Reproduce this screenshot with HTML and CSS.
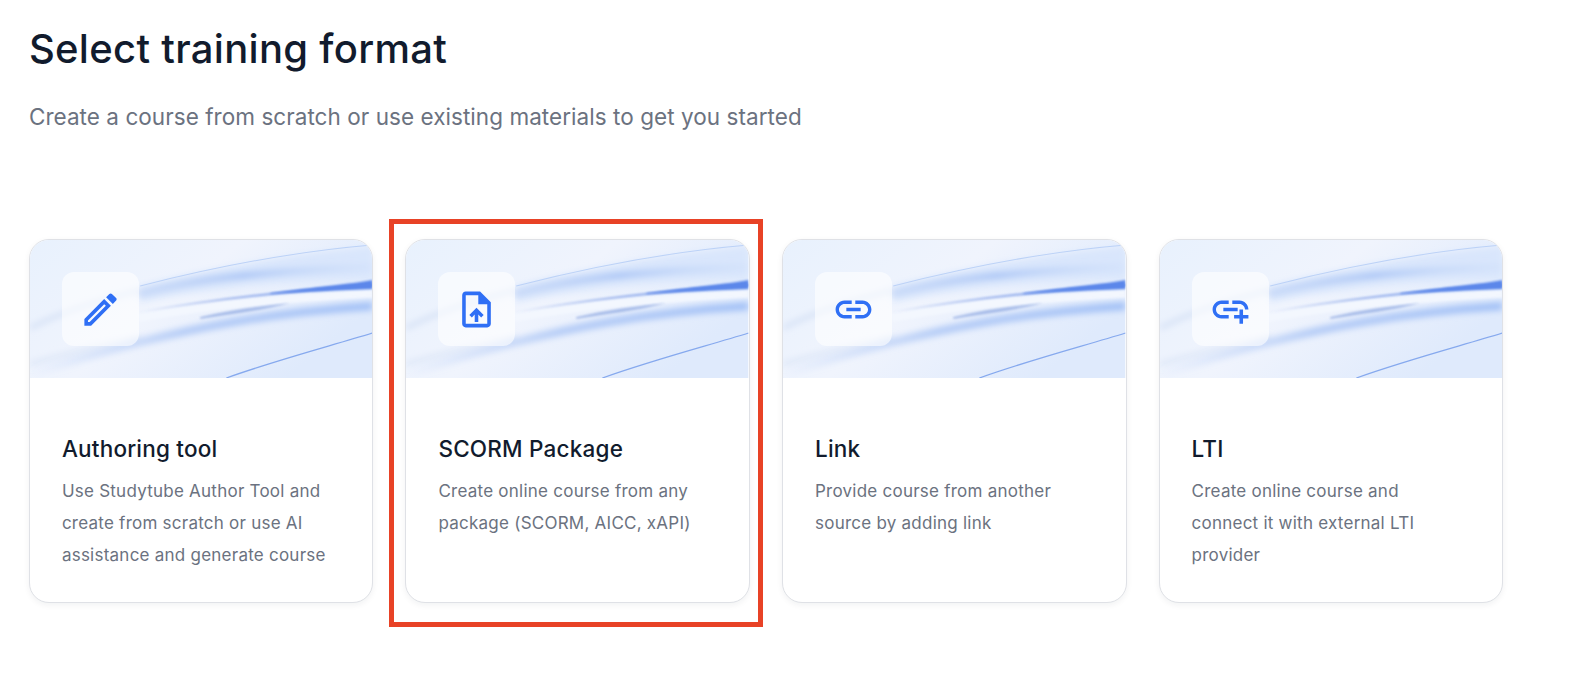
FILE: index.html
```html
<!DOCTYPE html>
<html lang="en">
<head>
    <meta charset="UTF-8">
    <title>Select training format</title>
    <link rel="stylesheet" href="styles.css">
</head>
<body>
    <svg class="defs" width="0" height="0" aria-hidden="true">
        <defs>
            <linearGradient id="bannerBase" x1="0" y1="0" x2="1" y2="0.5">
                <stop offset="0" stop-color="#e8f1fd"/>
                <stop offset="0.5" stop-color="#f0f4fd"/>
                <stop offset="1" stop-color="#dfeafc"/>
            </linearGradient>
            <linearGradient id="fadeIn" x1="0" y1="0" x2="1" y2="0">
                <stop offset="0" stop-color="#a9c4f5" stop-opacity="0"/>
                <stop offset="0.45" stop-color="#a9c4f5" stop-opacity="0.85"/>
                <stop offset="1" stop-color="#a0bff6"/>
            </linearGradient>
            <linearGradient id="topBand" x1="0" y1="0" x2="1" y2="0">
                <stop offset="0" stop-color="#b3caf4" stop-opacity="0.5"/>
                <stop offset="0.45" stop-color="#a9c4f5"/>
                <stop offset="1" stop-color="#c9dcf9" stop-opacity="0.3"/>
            </linearGradient>
            <linearGradient id="darkStreak" x1="0" y1="0" x2="1" y2="0">
                <stop offset="0" stop-color="#7f9de6" stop-opacity="0"/>
                <stop offset="0.4" stop-color="#7f9de6" stop-opacity="0.7"/>
                <stop offset="1" stop-color="#4f7ee8"/>
            </linearGradient>
            <filter id="blur1" x="-20%" y="-50%" width="140%" height="200%"><feGaussianBlur stdDeviation="1"/></filter>
            <filter id="blur3" x="-20%" y="-50%" width="140%" height="200%"><feGaussianBlur stdDeviation="3"/></filter>
            <symbol id="banner" viewBox="0 0 342 138" preserveAspectRatio="none">
                <rect width="342" height="138" fill="url(#bannerBase)"/>
                <path d="M0 88 C40 68 80 58 110 50" stroke="#d8e3f6" stroke-width="5" fill="none" filter="url(#blur3)"/>
                <path d="M0 124 C40 112 80 104 110 98" stroke="#dfe8f8" stroke-width="5" fill="none" filter="url(#blur3)"/>
                <path d="M110 46 C170 30 260 14 342 7 L342 38 C260 40 180 48 110 62Z" fill="#d9e6fc" filter="url(#blur3)"/>
                <path d="M108 54 C160 40 220 32 342 27" stroke="url(#topBand)" stroke-width="6" fill="none" filter="url(#blur3)"/>
                <path d="M110 46 C180 28 260 12 342 5" stroke="#bcd2f7" stroke-width="1" fill="none"/>
                <path d="M108 78 C170 66 260 58 342 54" stroke="#f3f7fe" stroke-width="8" fill="none" filter="url(#blur1)"/>
                <path d="M110 72 C190 58 270 50 342 45" stroke="url(#darkStreak)" stroke-width="2" fill="none" filter="url(#blur1)"/>
                <path d="M240 53 C285 47 320 44 342 40 L342 49 C310 50 275 52 240 54Z" fill="#5b87ea" filter="url(#blur1)"/>
                <path d="M170 77 C200 70 230 66 260 63 C230 71 200 74 170 79Z" fill="#a9bde9" filter="url(#blur1)"/>
                <path d="M0 134 C50 118 80 110 110 102 C150 92 180 86 203 82 C260 72 310 68 342 66" stroke="url(#fadeIn)" stroke-width="8" fill="none" filter="url(#blur3)"/>
                <path d="M196 138 C246 120 300 106 342 93" stroke="#86a9ee" stroke-width="1.3" fill="none"/>
            </symbol>
        </defs>
    </svg>

    <h1 class="page-title">Select training format</h1>
    <p class="page-subtitle">Create a course from scratch or use existing materials to get you started</p>

    <div class="formats">
        <div class="card">
            <div class="card-banner">
                <svg class="banner-art"><use href="#banner"/></svg>
                <div class="card-icon">
                    <svg viewBox="0 0 24 24"><path d="M14.06 9.02l.92.92L5.92 19H5v-.92l9.06-9.06M17.66 3c-.25 0-.51.1-.7.29l-1.83 1.83 3.75 3.75 1.83-1.83c.39-.39.39-1.02 0-1.41l-2.34-2.34c-.2-.2-.45-.29-.71-.29zm-3.6 3.19L3 17.25V21h3.75L17.81 9.94l-3.75-3.75z"/></svg>
                </div>
            </div>
            <div class="card-body">
                <h2>Authoring tool</h2>
                <p>Use Studytube Author Tool and create from scratch or use AI assistance and generate course</p>
            </div>
        </div>

        <div class="card">
            <div class="card-banner">
                <svg class="banner-art"><use href="#banner"/></svg>
                <div class="card-icon">
                    <svg viewBox="0 0 24 24"><path d="M14 2H6c-1.1 0-1.99.9-1.99 2L4 20c0 1.1.89 2 1.99 2H18c1.1 0 2-.9 2-2V8l-6-6zm4 18H6V4h7v5h5v11zM8 15.01l1.41 1.41L11 14.84V19h2v-4.16l1.59 1.59L16 15.01 12.01 11 8 15.01z"/></svg>
                </div>
            </div>
            <div class="card-body">
                <h2>SCORM Package</h2>
                <p>Create online course from any package (SCORM, AICC, xAPI)</p>
            </div>
            <div class="highlight"></div>
        </div>

        <div class="card">
            <div class="card-banner">
                <svg class="banner-art"><use href="#banner"/></svg>
                <div class="card-icon">
                    <svg viewBox="0 0 24 24"><path d="M3.9 12c0-1.71 1.39-3.1 3.1-3.1h4V7H7c-2.76 0-5 2.24-5 5s2.24 5 5 5h4v-1.9H7c-1.71 0-3.1-1.39-3.1-3.1zM8 13h8v-2H8v2zm9-6h-4v1.9h4c1.71 0 3.1 1.39 3.1 3.1s-1.39 3.1-3.1 3.1h-4V17h4c2.76 0 5-2.24 5-5s-2.24-5-5-5z"/></svg>
                </div>
            </div>
            <div class="card-body">
                <h2>Link</h2>
                <p>Provide course from another source by adding link</p>
            </div>
        </div>

        <div class="card">
            <div class="card-banner">
                <svg class="banner-art"><use href="#banner"/></svg>
                <div class="card-icon">
                    <svg viewBox="0 0 24 24"><path d="M8 11h8v2H8zm12.1 1H22c0-2.76-2.24-5-5-5h-4v1.9h4c1.71 0 3.1 1.39 3.1 3.1zM3.9 12c0-1.71 1.39-3.1 3.1-3.1h4V7H7c-2.76 0-5 2.24-5 5s2.24 5 5 5h4v-1.9H7c-1.71 0-3.1-1.39-3.1-3.1zM19 12h-2v3h-3v2h3v3h2v-3h3v-2h-3z"/></svg>
                </div>
            </div>
            <div class="card-body">
                <h2>LTI</h2>
                <p>Create online course and connect it with external LTI provider</p>
            </div>
        </div>
    </div>
</body>
</html>
```

FILE: styles.css
```css
* {
    box-sizing: border-box;
    margin: 0;
    padding: 0;
}

body {
    font-family: 'Inter', 'Liberation Sans', sans-serif;
    background-color: #fff;
    min-height: 678px;
    padding: 25px 68.9px 0 28.9px;
    color: #111b2d;
}

.defs {
    position: absolute;
}

.page-title {
    font-size: 40px;
    line-height: 48px;
    font-weight: 550;
    letter-spacing: 0.3px;
}

.page-subtitle {
    font-size: 22.5px;
    line-height: 32px;
    letter-spacing: 0.05px;
    color: #6b7280;
    margin-top: 28px;
}

.formats {
    display: grid;
    grid-template-columns: repeat(4, 1fr);
    gap: 32px;
    margin-top: 106px;
}

.card {
    position: relative;
    height: 364px;
    background-color: #fff;
    border: 1px solid #dfe1e6;
    border-radius: 20px;
    box-shadow: 0 2px 6px rgba(17, 27, 45, 0.06);
}

/* red frame marked on top of the screenshot */
.highlight {
    position: absolute;
    top: -21px;
    left: -17px;
    width: 374px;
    height: 408px;
    border: 5px solid #e84226;
    pointer-events: none;
}

.card-banner {
    position: relative;
    height: 138px;
    padding: 32px;
    border-radius: 19px 19px 0 0;
    overflow: hidden;
}

.banner-art {
    position: absolute;
    top: 0;
    left: 0;
    width: 100%;
    height: 100%;
}

.card-icon {
    position: relative;
    display: flex;
    align-items: center;
    justify-content: center;
    width: 77px;
    height: 74px;
    border-radius: 12px;
    background-color: rgba(255, 255, 255, 0.6);
}

.card-icon svg {
    width: 43px;
    height: 43px;
    fill: #2f6ff5;
}

.card-body {
    padding: 55px 40px 0 32px;
}

.card-body h2 {
    font-size: 22.5px;
    line-height: 32px;
    font-weight: 500;
    letter-spacing: 0.2px;
}

.card-body p {
    font-size: 17px;
    line-height: 32px;
    letter-spacing: 0.24px;
    color: #6b7280;
    margin-top: 10px;
}
```
